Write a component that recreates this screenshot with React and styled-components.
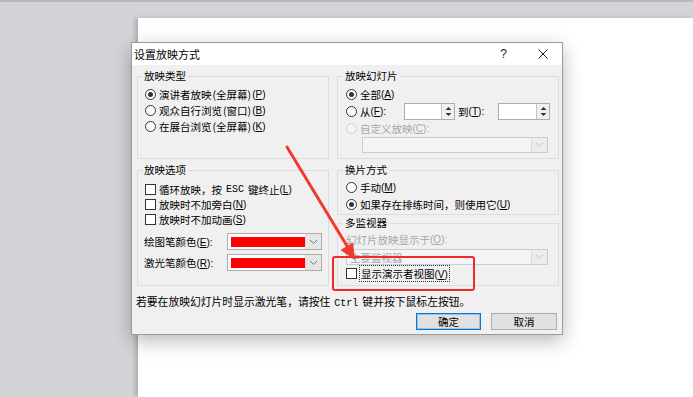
import styled, { createGlobalStyle } from "styled-components"

const GlobalStyle = createGlobalStyle`
  html, body {
    margin: 0;
    padding: 0;
    background: #d2d4d7;
  }
  body {
    font-family: "Noto Sans CJK SC", "Noto Sans", sans-serif;
  }
`

const Screen = styled.div`
  position: relative;
  width: 693px;
  height: 397px;
  overflow: hidden;
  display: flex;
  box-sizing: border-box;
  background: #d2d4d7;
  border-top: 2px solid #b6b9bd;
`

const Slide = styled.div`
  flex: 1;
  margin: 16px 0 0 138px;
  background: #fff;
  box-shadow: -3px 0 4px rgba(0, 0, 0, 0.18);
`

const Window = styled.div`
  position: absolute;
  left: 131px;
  top: 40px;
  width: 432px;
  box-sizing: border-box;
  border: 1px solid #9a9a9a;
  background: #f0f0f0;
  box-shadow: 0 6px 18px rgba(0, 0, 0, 0.28);
  font-size: 10.5px;
  color: #000;
  z-index: 1;
`

const TitleBar = styled.div`
  height: 22px;
  display: flex;
  align-items: center;
  padding-left: 2px;
  background: #fff;
  font-size: 11px;
`

const Title = styled.span`
  flex: 1;
`

const TitleButton = styled.span`
  width: 39px;
  height: 22px;
  display: flex;
  align-items: center;
  justify-content: center;
  font-family: "Liberation Sans", sans-serif;
  font-size: 12px;
  color: #222;
`

const Body = styled.div`
  padding: 4px 3px 4px 5px;
`

const Columns = styled.div`
  display: grid;
  grid-template-columns: 192px 222px;
  grid-template-rows: 90px 123px;
  column-gap: 8px;
  row-gap: 4px;
`

const Stack = styled.div`
  display: flex;
  flex-direction: column;
  gap: 1px;
`

const Group = styled.fieldset`
  margin: 0;
  min-width: 0;
  box-sizing: border-box;
  border: 1px solid #dcdcdc;
  padding: ${p => p.$pad};
  display: flex;
  flex-direction: column;
  flex: ${p => (p.$grow ? 1 : "none")};
`

const Legend = styled.legend`
  padding: 0 2px;
  margin-left: -3px;
  line-height: 14px;
`

const Option = styled.label`
  display: flex;
  align-items: center;
  height: ${p => p.$h || 16}px;
  flex: none;
  white-space: nowrap;
  color: ${p => (p.$disabled ? "#a6a6a6" : "#000")};
`

const Radio = styled.span`
  position: relative;
  flex: none;
  width: 11px;
  height: 11px;
  margin-right: 3px;
  box-sizing: border-box;
  border-radius: 50%;
  border: 1px solid ${p => (p.$disabled ? "#cfcfcf" : "#333")};
  background: ${p => (p.$disabled ? "#f4f4f4" : "#fff")};

  &::after {
    content: "";
    position: absolute;
    inset: 2px;
    border-radius: 50%;
    background: #333;
    display: ${p => (p.$checked ? "block" : "none")};
  }
`

const Check = styled.span`
  flex: none;
  width: 11px;
  height: 11px;
  margin-right: 3px;
  box-sizing: border-box;
  border: 1px solid #333;
  background: #fff;
`

const Mono = styled.span`
  font-family: "Liberation Mono", monospace;
  font-size: 10px;
  margin: 0 4px;
`

const Latin = styled.span`
  font-family: "Liberation Sans", sans-serif;
  font-size: 10px;
`

const Paren = styled.span`
  margin: 0 1px;
`

const Focus = styled.span`
  outline: 1px dotted #333;
  outline-offset: 0;
  padding: 0 1px;
`

const Field = styled.span`
  display: flex;
  flex: none;
  box-sizing: border-box;
  width: ${p => p.$w}px;
  height: 17px;
  margin: 0 ${p => p.$mr || 0}px 0 ${p => p.$ml || 0}px;
  border: 1px solid #adadad;
  background: #fff;
`

const Spin = styled.span`
  margin-left: auto;
  width: 12px;
  display: flex;
  align-items: center;
  justify-content: center;
  background: #f0f0f0;
  border-left: 1px solid #c4c4c4;
`

const Select = styled.span`
  display: flex;
  align-items: center;
  box-sizing: border-box;
  height: ${p => p.$h || 17}px;
  width: ${p => p.$w}px;
  margin-left: ${p => p.$ml || 0}px;
  margin-top: ${p => p.$mt || 0}px;
  padding-left: 3px;
  border: 1px solid ${p => (p.$disabled ? "#c3cfdc" : "#adadad")};
  background: ${p => (p.$disabled ? "#f4f4f4" : "#fff")};
  color: #a6a6a6;
  flex: none;
`

const Swatch = styled.span`
  width: 74px;
  height: 10px;
  background: #ff0000;
`

const Arrow = styled.span`
  margin-left: auto;
  width: 15px;
  height: 100%;
  display: flex;
  align-items: center;
  justify-content: center;
  background: ${p => (p.$disabled ? "#ececec" : "#e6e6e6")};
  border-left: 1px solid #dadada;
`

const ColorRow = styled.div`
  display: flex;
  align-items: center;
  justify-content: space-between;
  margin-top: ${p => p.$mt}px;
  margin-left: -1px;
`

const Hint = styled.div`
  margin: 8px 0 0 -1px;
  line-height: 14px;
  font-size: 10.8px;
  white-space: nowrap;
`

const Actions = styled.div`
  display: flex;
  justify-content: flex-end;
  gap: 10px;
  margin-top: 2px;
  padding-right: 2px;
`

const Button = styled.span`
  width: ${p => p.$w}px;
  height: 17px;
  box-sizing: border-box;
  display: flex;
  align-items: center;
  justify-content: center;
  background: #e1e1e1;
  border: 1px solid ${p => (p.$primary ? "#0078d7" : "#adadad")};
  box-shadow: ${p => (p.$primary ? "inset 0 0 0 1px rgba(0, 120, 215, 0.3)" : "none")};
`

const Overlay = styled.svg`
  position: absolute;
  left: 0;
  top: 0;
  width: 693px;
  height: 397px;
  pointer-events: none;
  z-index: 2;
`

function Chevron({ color = "#777" }) {
  return (
    <svg width="9" height="6" viewBox="0 0 9 6">
      <polyline points="1,1 4.5,4.5 8,1" fill="none" stroke={color} strokeWidth="1" />
    </svg>
  )
}

function SpinArrows() {
  return (
    <svg width="7" height="11" viewBox="0 0 7 11">
      <polygon points="3.5,1 6.5,4 0.5,4" fill="#333" />
      <polygon points="0.5,7 6.5,7 3.5,10" fill="#333" />
    </svg>
  )
}

// accelerator key such as (P), with the letter underlined
const K = ({ children, colon }) => (
  <Latin>
    (<u>{children}</u>){colon ? ":" : ""}
  </Latin>
)

const P = ({ children }) => <Paren>({children})</Paren>

export default function App() {
  return (
    <>
      <GlobalStyle />
      <Screen>
        <Slide />

        <Window>
          <TitleBar>
            <Title>设置放映方式</Title>
            <TitleButton>?</TitleButton>
            <TitleButton>
              <svg width="10" height="10" viewBox="0 0 10 10">
                <path d="M0.5 0.5 L9.5 9.5 M9.5 0.5 L0.5 9.5" stroke="#222" strokeWidth="1" />
              </svg>
            </TitleButton>
          </TitleBar>

          <Body>
            <Columns>
              <Group $pad="3px 6px 0 7px">
                <Legend>放映类型</Legend>
                <Option>
                  <Radio $checked />
                  演讲者放映<P>全屏幕</P><K>P</K>
                </Option>
                <Option>
                  <Radio />
                  观众自行浏览<P>窗口</P><K>B</K>
                </Option>
                <Option>
                  <Radio />
                  在展台浏览<P>全屏幕</P><K>K</K>
                </Option>
              </Group>

              <Group $pad="3px 8px 0 8px">
                <Legend>放映幻灯片</Legend>
                <Option>
                  <Radio $checked />
                  全部<K>A</K>
                </Option>
                <Option $h={18}>
                  <Radio />
                  从<K colon>F</K>
                  <Field $w={51} $ml={18} $mr={3}>
                    <Spin>
                      <SpinArrows />
                    </Spin>
                  </Field>
                  到<K colon>T</K>
                  <Field $w={52} $ml={14}>
                    <Spin>
                      <SpinArrows />
                    </Spin>
                  </Field>
                </Option>
                <Option $disabled>
                  <Radio $disabled />
                  自定义放映<K colon>C</K>
                </Option>
                <Select $disabled $w={186} $ml={16} $h={16} $mt={1}>
                  <Arrow $disabled>
                    <Chevron color="#c0c0c0" />
                  </Arrow>
                </Select>
              </Group>

              <Group $pad="5px 6px 0 7px">
                <Legend>放映选项</Legend>
                <Option $h={15}>
                  <Check />
                  循环放映，按<Mono>ESC</Mono>键终止<K>L</K>
                </Option>
                <Option $h={15}>
                  <Check />
                  放映时不加旁白<K>N</K>
                </Option>
                <Option $h={15}>
                  <Check />
                  放映时不加动画<K>S</K>
                </Option>
                <ColorRow $mt={6}>
                  <span>绘图笔颜色<K colon>E</K></span>
                  <Select $w={95}>
                    <Swatch />
                    <Arrow>
                      <Chevron />
                    </Arrow>
                  </Select>
                </ColorRow>
                <ColorRow $mt={4}>
                  <span>激光笔颜色<K colon>R</K></span>
                  <Select $w={95}>
                    <Swatch />
                    <Arrow>
                      <Chevron />
                    </Arrow>
                  </Select>
                </ColorRow>
              </Group>

              <Stack>
                <Group $pad="2px 8px 1px 8px">
                  <Legend>换片方式</Legend>
                  <Option $h={17}>
                    <Radio />
                    手动<K>M</K>
                  </Option>
                  <Option $h={17}>
                    <Radio $checked />
                    如果存在排练时间，则使用它<K>U</K>
                  </Option>
                </Group>
                <Group $grow $pad="2px 8px 0 8px">
                  <Legend>多监视器</Legend>
                  <Option $disabled $h={14}>
                    幻灯片放映显示于<K colon>O</K>
                  </Option>
                  <Select $disabled $w={202} $h={16} $mt={3}>
                    主要监视器
                    <Arrow $disabled>
                      <Chevron color="#c0c0c0" />
                    </Arrow>
                  </Select>
                  <Option $h={15} style={{ marginTop: 1 }}>
                    <Check />
                    <Focus>
                      显示演示者视图<K>V</K>
                    </Focus>
                  </Option>
                </Group>
              </Stack>
            </Columns>

            <Hint>
              若要在放映幻灯片时显示激光笔，请按住<Mono>Ctrl</Mono>键并按下鼠标左按钮。
            </Hint>

            <Actions>
              <Button $primary $w={65}>确定</Button>
              <Button $w={66}>取消</Button>
            </Actions>
          </Body>
        </Window>

        <Overlay viewBox="0 0 693 397">
          <rect x="333" y="255" width="141" height="33" rx="2" fill="none" stroke="#ee2a2a" strokeWidth="2" />
          <line x1="287" y1="145" x2="347" y2="244" stroke="#f03a2e" strokeWidth="3" strokeLinecap="round" />
          <polygon points="355,258 340.5,248 353,240.5" fill="#f03a2e" />
        </Overlay>
      </Screen>
    </>
  )
}
